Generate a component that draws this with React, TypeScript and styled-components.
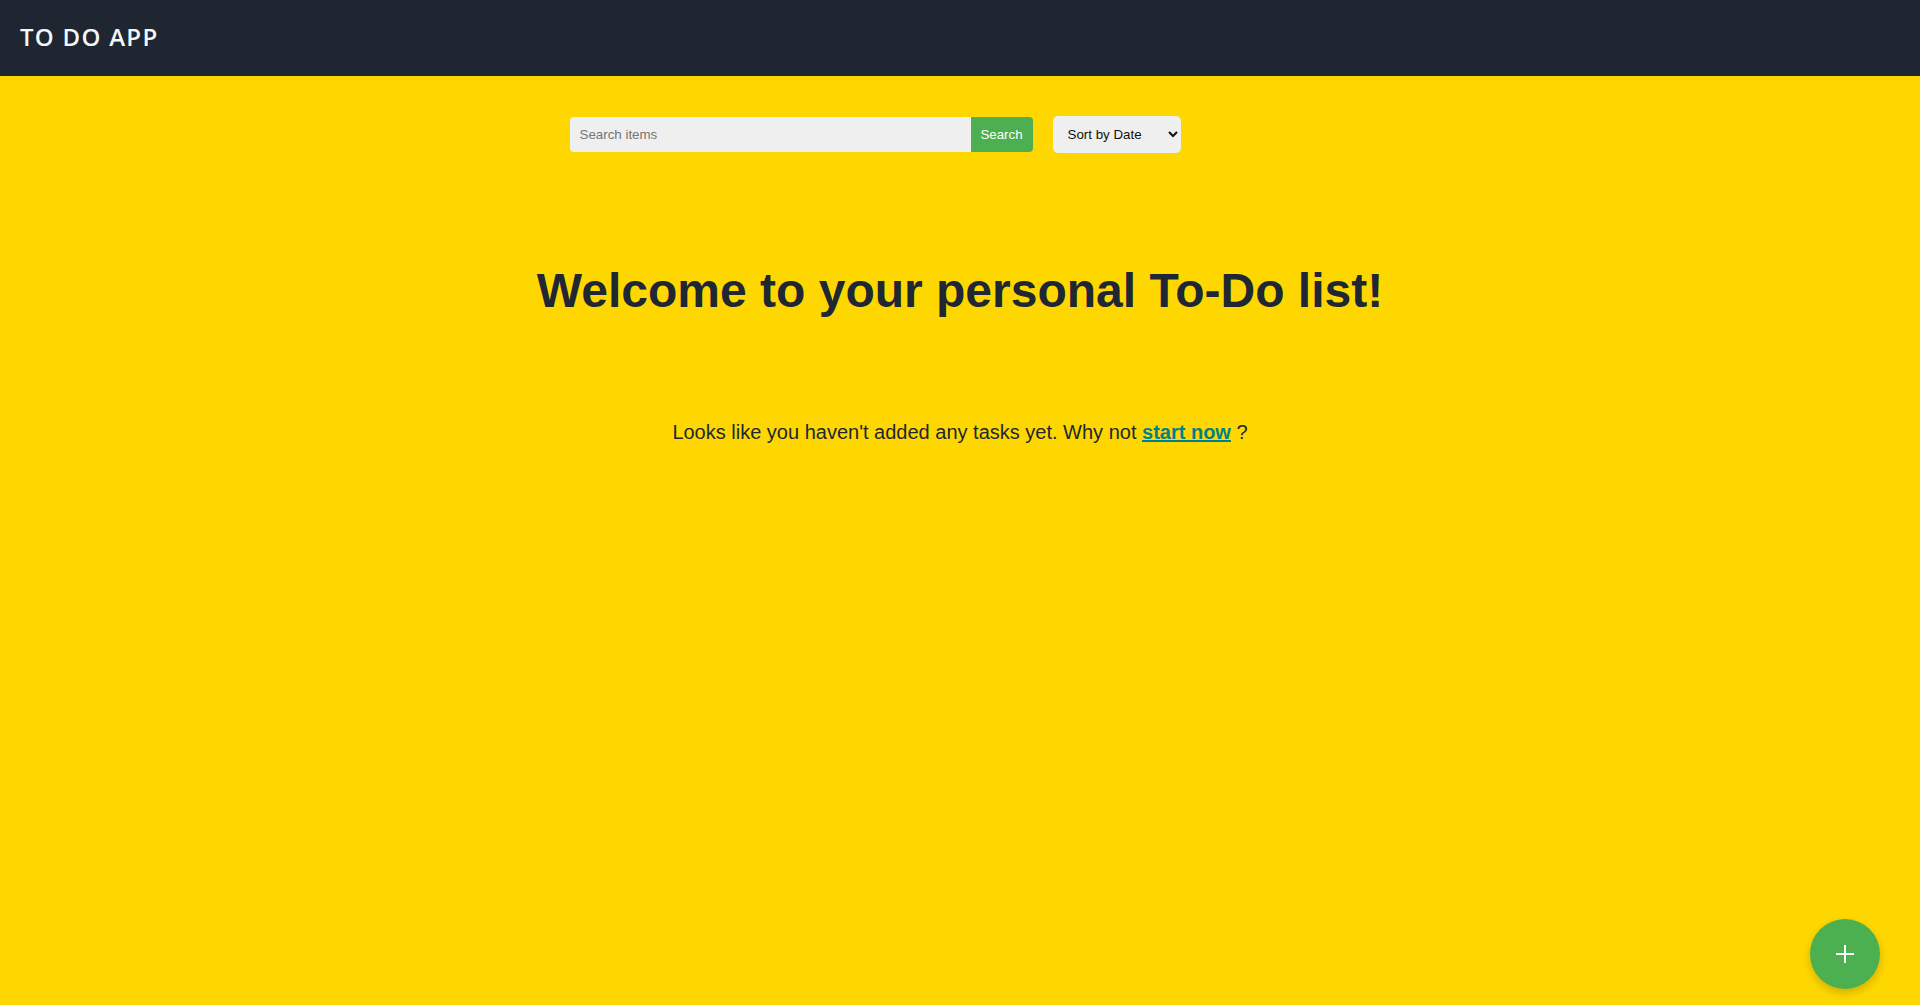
import React from "react";
import styled, { createGlobalStyle } from "styled-components";

const GlobalStyle = createGlobalStyle`
  html, body { margin: 0; padding: 0; }
  body {
    background: #ffd700;
    font-family: "Liberation Sans", Arial, sans-serif;
    min-height: 1005px;
  }
`;

const Page = styled.div`
  min-height: 1005px;
  display: flex;
  flex-direction: column;
  background: #ffd700;
`;

const Header = styled.header`
  height: 76px;
  background: #1e2731;
  display: flex;
  align-items: center;
  padding: 0 20px;
  box-sizing: border-box;
`;

const Brand = styled.h1`
  margin: 0;
  color: #f4f6f8;
  font-family: "Open Sans", "Noto Sans", sans-serif;
  font-weight: 600;
  font-size: 24px;
  letter-spacing: 1.3px;
  padding-bottom: 4px;
`;

const Main = styled.main`
  display: flex;
  flex-direction: column;
  align-items: center;
`;

const Toolbar = styled.div`
  display: flex;
  align-items: center;
  justify-content: center;
  gap: 20px;
  padding: 40px 170px 0 0;
  width: 100%;
  box-sizing: border-box;
`;

const SearchForm = styled.form`
  display: flex;
  height: 35px;
`;

const SearchInput = styled.input`
  width: 401px;
  height: 35px;
  box-sizing: border-box;
  border: none;
  outline: none;
  background: #efefef;
  border-radius: 4px 0 0 4px;
  padding: 0 10px;
  font-family: "Liberation Sans", Arial, sans-serif;
  font-size: 13.33px;
  color: #333;
  &::placeholder { color: #757575; }
`;

const SearchButton = styled.button`
  width: 62px;
  height: 35px;
  border: none;
  background: #4caf50;
  color: #fff;
  border-radius: 0 4px 4px 0;
  font-family: "Liberation Sans", Arial, sans-serif;
  font-size: 13.33px;
  padding: 0;
  cursor: pointer;
`;

const SortSelect = styled.select`
  width: 128px;
  height: 37px;
  border: none;
  background: #efefef;
  border-radius: 5px;
  padding: 0 8px 0 11px;
  font-family: "Liberation Sans", Arial, sans-serif;
  font-size: 13.33px;
  color: #111;
  outline: none;
`;

const Title = styled.h2`
  margin: 110px 0 0;
  font-size: 48px;
  font-weight: 700;
  color: #1e2732;
  line-height: 55px;
  text-align: center;
`;

const Message = styled.p`
  margin: 103px 0 0;
  font-size: 20px;
  line-height: 23px;
  color: #1e2732;
  text-align: center;
`;

const StartLink = styled.a`
  color: #00818a;
  font-weight: 700;
  text-decoration: underline;
  cursor: pointer;
`;

const Fab = styled.button`
  position: fixed;
  right: 40px;
  bottom: 16px;
  width: 70px;
  height: 70px;
  border-radius: 50%;
  border: none;
  background: #4caf50;
  box-shadow: 0 4px 10px rgba(0, 0, 0, 0.18);
  display: flex;
  align-items: center;
  justify-content: center;
  padding: 0;
  cursor: pointer;
`;

export default function App() {
  return (
    <>
      <GlobalStyle />
      <Page>
        <Header>
          <Brand>TO DO APP</Brand>
        </Header>
        <Main>
          <Toolbar>
            <SearchForm onSubmit={(e) => e.preventDefault()}>
              <SearchInput placeholder="Search items" />
              <SearchButton type="submit">Search</SearchButton>
            </SearchForm>
            <SortSelect defaultValue="date">
              <option value="date">Sort by Date</option>
              <option value="name">Sort by Name</option>
            </SortSelect>
          </Toolbar>
          <Title>Welcome to your personal To-Do list!</Title>
          <Message>
            Looks like you haven't added any tasks yet. Why not{" "}
            <StartLink>start now</StartLink> ?
          </Message>
        </Main>
        <Fab aria-label="Add task">
          <svg width="20" height="20" viewBox="0 0 20 20">
            <path d="M10 1v18M1 10h18" stroke="#fff" strokeWidth="2" />
          </svg>
        </Fab>
      </Page>
    </>
  );
}
